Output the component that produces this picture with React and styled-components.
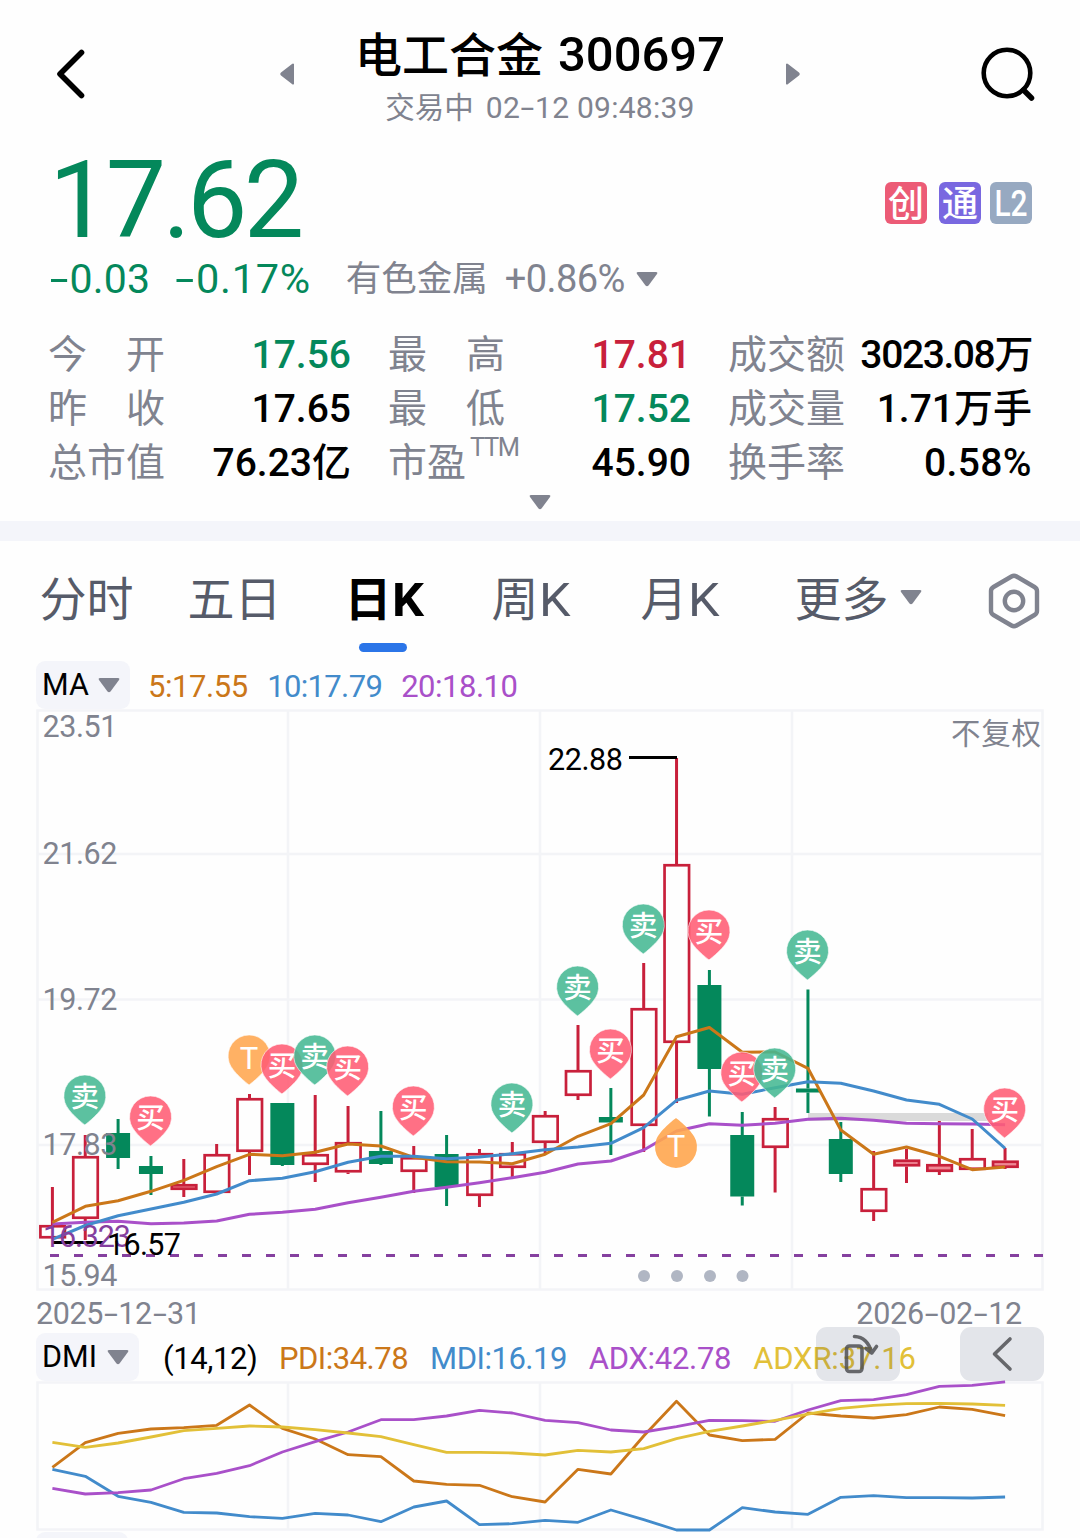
import React from "react";
import styled, { createGlobalStyle } from "styled-components";

const GREEN = "#04885b";
const RED = "#c8203b";
const GRAY = "#80838f";
const ORANGE = "#cb7719";
const BLUE = "#428bcb";
const PURPLE = "#a950c9";
const YELLOW = "#e2c038";
const GRID = "#f3f4f7";
const FONT = '"Roboto", "Noto Sans CJK SC", sans-serif';

const GlobalStyle = createGlobalStyle`
  * { box-sizing: border-box; }
  body { margin: 0; background: #fefefe; font-family: ${FONT}; }
`;

const Page = styled.main`
  width: 1080px;
  height: 1538px;
  overflow: hidden;
  display: flex;
  flex-direction: column;
  background: #fefefe;
`;

const Txt = styled.span`
  display: block;
  white-space: nowrap;
  font-size: ${(p) => p.$size}px;
  line-height: ${(p) => p.$lh || 40}px;
  color: ${(p) => p.$color || "#000"};
  font-weight: ${(p) => p.$weight || 400};
  letter-spacing: ${(p) => p.$ls || 0}px;
`;

const Dash = styled.span`
  display: inline-block;
  width: 0.5em;
  text-align: center;
  transform: scaleX(1.65);
`;

const dashed = (text) =>
  text.split("-").flatMap((part, i) => (i ? [<Dash key={i}>-</Dash>, part] : [part]));

/* Header */
const Header = styled.header`
  height: 142px;
  flex: none;
  padding: 0 46px 0 57px;
  display: grid;
  grid-template-columns: 42px 520px 53px;
  justify-content: space-between;
  padding-top: 27px;
`;
const BackButton = styled.div`padding-top: 22px;`;
const SearchButton = styled.div`padding-top: 19px;`;
const TitleGroup = styled.div`
  display: flex;
  justify-content: space-between;
`;
const Stepper = styled.div`padding-top: 36px;`;
const Titles = styled.div`
  display: flex;
  flex-direction: column;
  align-items: center;
`;
const TitleRow = styled.div`
  display: flex;
  height: ${(p) => p.$h}px;
  gap: ${(p) => p.$gap}px;
`;

/* Quote */
const Quote = styled.section`
  height: 182px;
  flex: none;
  padding: 0 48px 0 49px;
`;
const PriceRow = styled.div`
  height: 113px;
  display: flex;
  justify-content: space-between;
`;
const Badges = styled.div`
  display: flex;
  padding-top: 40px;
`;
const Badge = styled.span`
  width: 42px;
  height: 42px;
  margin-left: ${(p) => p.$gap || 0}px;
  border-radius: 6px;
  background: ${(p) => p.$bg};
  color: #fff;
  font-size: 36px;
  font-weight: 500;
  line-height: 46px;
  display: flex;
  justify-content: center;
`;
const Condensed = styled.span`
  display: block;
  flex: none;
  line-height: 44px;
  transform: scaleX(0.83);
`;
const ChangeRow = styled.div`
  display: flex;
  align-items: center;
  height: 47px;
`;
const Gap = styled.span`width: ${(p) => p.$w}px; flex: none;`;

/* Stats */
const Stats = styled.section`
  height: 197px;
  flex: none;
  padding: 3px 48px 0 48px;
`;
const StatGrid = styled.div`
  display: grid;
  grid-template-columns: 303px 303px 304px;
  column-gap: 37px;
  grid-auto-rows: 54px;
`;
const Stat = styled.div`
  display: flex;
  justify-content: space-between;
`;
const StatLabel = styled.div`display: flex;`;
const Sup = styled.span`
  font-size: 25.5px;
  line-height: 25px;
  margin-left: 4px;
  letter-spacing: -1.4px;
  color: ${GRAY};
`;
const Expand = styled.div`
  display: flex;
  justify-content: center;
  padding-top: 5px;
`;
const Divider = styled.div`
  height: 20px;
  flex: none;
  background: #f4f5fa;
`;

/* Period tabs */
const Tabs = styled.nav`
  height: 120px;
  flex: none;
  padding: 26px 0 0 39.5px;
  display: grid;
  grid-template-columns: 148px 157px 147px 149px 154px 193px 60px;
`;
const Tab = styled.div`
  display: flex;
  flex-wrap: wrap;
  align-content: flex-start;
  color: ${(p) => (p.$active ? "#000" : "#565b69")};
  font-weight: ${(p) => (p.$active ? 700 : 400)};
  font-size: 47px;
  line-height: 66px;
  white-space: nowrap;
`;
const Wide = styled.span`
  display: block;
  transform: scaleX(1.07);
  transform-origin: left;
`;
const Underline = styled.div`
  width: 48px;
  height: 9px;
  margin: 10px 60px 0 14.5px;
  border-radius: 5px;
  background: #2b75e8;
`;
const TabCaret = styled.span`
  display: flex;
  padding: 22px 0 0 11px;
`;
const SettingsIcon = styled.div`padding-top: 6px;`;

/* Indicators */
const LegendBar = styled.div`
  height: ${(p) => p.$h}px;
  flex: none;
  padding-left: 36px;
  display: flex;
  position: relative;
`;
const Picker = styled.div`
  width: ${(p) => p.$w}px;
  height: 48px;
  border-radius: 9px;
  background: #f4f5fa;
  padding: 0 10px 0 6px;
  display: flex;
  align-items: center;
  justify-content: space-between;
`;
const Chart = styled.svg`
  display: block;
  flex: none;
  overflow: visible;
  font-family: ${FONT};
`;
const Dates = styled.div`
  height: 42px;
  flex: none;
  display: flex;
  justify-content: space-between;
  padding: 2px 58px 0 36px;
`;
const FloatButton = styled.div`
  position: absolute;
  left: ${(p) => p.$x}px;
  top: -6px;
  width: 84px;
  height: 54px;
  border-radius: 11px;
  background: rgba(50, 60, 100, 0.13);
`;
const NextPanel = styled.div`
  width: 92px;
  height: 20px;
  margin: 1px 0 0 36px;
  border-radius: 9px;
  background: #f4f5fa;
  flex: none;
`;

const Caret = ({ w = 22, h = 16 }) => (
  <svg width={w} height={h} viewBox="0 0 22 16" preserveAspectRatio="none">
    <path d="M2 1H20Q22 1 21 3L12.5 14.5Q11 16 9.5 14.5L1 3Q0 1 2 1Z" fill={GRAY} />
  </svg>
);

const SideArrow = ({ flip }) => (
  <svg width="14" height="22" viewBox="0 0 14 22">
    <path d="M14 1V21Q13 22 12 21L1 12.5Q-.5 11 1 9.5L12 1Q13 0 14 1Z" fill={GRAY} transform={flip ? "matrix(-1 0 0 1 14 0)" : undefined} />
  </svg>
);

const px = (i) => 52.4 + i * 32.85;
const line = (ys) => ys.map((y, i) => `${px(i).toFixed(1)},${y}`).join(" ");

/* rising flag, high, body top, body bottom, low */
const CANDLES = [
  [1, 1187, 1225, 1238.5, 1238], [1, 1135, 1156, 1219, 1240], [0, 1119, 1133, 1158, 1169],
  [0, 1156, 1166, 1174, 1195], [1, 1159, 1184, 1190, 1197], [1, 1144, 1154, 1193, 1193],
  [1, 1094, 1098, 1152, 1175], [0, 1103, 1103, 1165, 1166], [1, 1095, 1154, 1165, 1182],
  [1, 1106, 1142, 1172.5, 1174], [0, 1111, 1151, 1164, 1165], [1, 1146, 1157, 1172, 1193],
  [0, 1135, 1154, 1187, 1206], [1, 1149, 1153, 1196, 1207], [1, 1142, 1153, 1168, 1177],
  [1, 1111, 1115, 1143, 1153], [1, 1025, 1070, 1096, 1100], [0, 1088, 1117, 1122.5, 1155],
  [1, 963, 1008, 1126, 1152], [1, 758, 864, 1043, 1103], [0, 970, 985, 1069, 1116.5],
  [0, 1112, 1135, 1196.5, 1205.5], [1, 1107, 1118, 1148, 1192.5], [0, 989.5, 1088.5, 1092.5, 1113],
  [0, 1122, 1139, 1174, 1182], [1, 1151, 1188, 1212, 1221], [1, 1149, 1159.5, 1166.5, 1183],
  [1, 1121, 1164, 1172, 1175], [1, 1129, 1158, 1170, 1170], [1, 1148, 1160.5, 1168, 1169],
];

const MA5 = [1222.3, 1206.3, 1200.7, 1191.3, 1180.3, 1166.7, 1154.3, 1155.7, 1152.3, 1144, 1146, 1157.3, 1161.7, 1162, 1163.7, 1154.3, 1136.3, 1123.7, 1095, 1036.7, 1027.5, 1052.3, 1052, 1068.3, 1130, 1154.3, 1147, 1156.3, 1169.7, 1167];
const MA10 = [1239.3, 1225.5, 1215.7, 1209, 1202.3, 1194, 1180.7, 1178.3, 1171.7, 1162.3, 1156.3, 1156.3, 1158.7, 1157, 1153.7, 1149.7, 1147, 1143.3, 1127.7, 1100.3, 1091, 1094.3, 1087.7, 1081.7, 1083.3, 1091, 1100, 1104.3, 1119, 1148.3];
const MA20 = [1224, 1222.3, 1221.3, 1223.7, 1223, 1221, 1214.3, 1212.3, 1209.3, 1202.7, 1197.3, 1191.3, 1187.3, 1182.7, 1177.7, 1172.3, 1164, 1161, 1150, 1131, 1123.7, 1125.3, 1123.3, 1119.3, 1118.3, 1120.3, 1123.3, 1123.7, 1124, 1124.7];

const PDI = [1467.3, 1442.7, 1433.3, 1429, 1427.7, 1425.3, 1405, 1428.3, 1439, 1454.7, 1456.7, 1481, 1484.3, 1485.3, 1496.7, 1502, 1469.3, 1474, 1436, 1401.3, 1435, 1440.7, 1439.3, 1413, 1416, 1418, 1414.7, 1407, 1409.3, 1415.7];
const MDI = [1469.3, 1476.3, 1496.3, 1502.3, 1512.3, 1513, 1516.7, 1518.3, 1513.3, 1515, 1521.7, 1507, 1501, 1524.7, 1523.7, 1520.3, 1522.3, 1510, 1519.7, 1530, 1530, 1507.7, 1512, 1514.3, 1497.3, 1495.7, 1497.7, 1497.7, 1498, 1497];
const ADX = [1488.3, 1494, 1492.7, 1490, 1478.7, 1473.3, 1465.7, 1452, 1441.7, 1432, 1419.7, 1419.7, 1416, 1410.3, 1413, 1420.3, 1422.7, 1430, 1432, 1426.7, 1420.3, 1420.7, 1421.3, 1410, 1400.7, 1399.7, 1394.7, 1386.3, 1385.3, 1381.8];
const ADXR = [1442.3, 1447.3, 1443, 1437, 1430.7, 1428.3, 1426, 1427, 1429.7, 1433, 1436.7, 1444.7, 1452.3, 1452.3, 1453, 1455, 1450.3, 1452, 1448.7, 1438.7, 1431.3, 1426, 1420.3, 1414, 1408.3, 1405.3, 1403.7, 1403.3, 1404, 1405.3];

/* candle index, top edge, kind */
const MARKERS = [
  [1, 1074, "卖"], [3, 1095, "买"], [6, 1034, "T"], [7, 1043, "买"], [8, 1034, "卖"], [9, 1045, "买"],
  [11, 1085, "买"], [14, 1082, "卖"], [16, 965, "卖"], [17, 1028, "买"], [18, 903, "卖"], [20, 909, "买"],
  [21, 1051, "买"], [22, 1047, "卖"], [23, 929, "卖"], [29, 1087, "买"],
];
const MARK_FILL = { 卖: "#45b893", 买: "#ff5c74", T: "#ffa64f" };
const DROP = "M0 51C-2 49.5 -17 38 -20 28.5A21 21 0 1 1 20 28.5C17 38 2 49.5 0 51Z";

const Candle = ({ i, c: [up, high, top, bottom, low] }) => {
  const x = px(i);
  const col = up ? RED : GREEN;
  return (
    <g>
      <path d={`M${x} ${high}V${top}M${x} ${bottom}V${low}`} stroke={col} strokeWidth="3" />
      {up ? (
        <rect x={x - 12} y={top + 1.25} width="24.5" height={bottom - top - 2.5} fill={bottom - top < 9 ? "#ef8795" : "#fefefe"} stroke={col} strokeWidth="2.7" />
      ) : (
        <rect x={x - 12} y={top} width="24" height={bottom - top} fill={col} />
      )}
    </g>
  );
};

const Marker = ({ i, y, kind }) => (
  <g transform={`translate(${px(i) - 0.4} ${y - 0.1})`}>
    <path d={DROP} fill={MARK_FILL[kind]} fillOpacity=".88" stroke="#fff" strokeOpacity=".6" strokeWidth="1" />
    <text y={kind === "T" ? 35 : 33} textAnchor="middle" fontSize={kind === "T" ? 31 : 28.5} fill="#fff" fontWeight={kind === "T" ? 400 : 500}>{kind}</text>
  </g>
);

const AXIS = [["23.51", 737], ["21.62", 864], ["19.72", 1010], ["17.83", 1155], ["15.94", 1286]];

const PriceChart = () => (
  <Chart width="1080" height="582" viewBox="0 709 1080 582">
    <path d="M37.5 710.5H1042.5V1289.5H37.5ZM288 711V1289M540 711V1289M792 711V1289M38 854H1042M38 999.5H1042M38 1145H1042" fill="none" stroke={GRID} strokeWidth="2.6" />
    <rect x="808" y="1113" width="180" height="8" fill="#dadada" />
    {CANDLES.map((c, i) => <Candle key={i} i={i} c={c} />)}
    <g fill="none" strokeWidth="3" strokeLinejoin="round">
      <polyline points={line(MA20)} stroke={PURPLE} />
      <polyline points={line(MA5)} stroke={ORANGE} />
      <polyline points={line(MA10)} stroke={BLUE} />
    </g>
    <path d="M50 1255.5H1043" stroke="#85409f" strokeWidth="3" strokeDasharray="9 15" />
    <path d="M52 1242.5H103M629 757.5H677" stroke="#000" strokeWidth="2.8" />
    <g fontSize="30.5" fill={GRAY}>
      {AXIS.map(([t, y]) => <text key={t} x="42.5" y={y} textLength="75">{t}</text>)}
      <text x="951" y="744" textLength="90" fontSize="29.5">不复权</text>
    </g>
    <text x="43" y="1247" textLength="88" fontSize="30.5" fill="#85409f">16.323</text>
    <g fontSize="30.5" fill="#000">
      <text x="107" y="1255" textLength="74">16.57</text>
      <text x="548" y="770" textLength="75">22.88</text>
    </g>
    {MARKERS.map(([i, y, kind]) => <Marker key={i} i={i} y={y} kind={kind} />)}
    <path d={DROP} transform="translate(676 1169) scale(1 -1)" fill="#ffa64f" fillOpacity=".9" />
    <text x="676" y="1157" textAnchor="middle" fontSize="31" fill="#fff">T</text>
    {[644, 677, 710, 742.5].map((x) => <circle key={x} cx={x} cy="1276" r="6" fill="#b0b6c3" />)}
  </Chart>
);

const DmiChart = () => (
  <Chart width="1080" height="150" viewBox="0 1381 1080 150">
    <path d="M37.5 1382.5H1042.5V1529.5H37.5ZM288 1383V1529M540 1383V1529M792 1383V1529" fill="none" stroke={GRID} strokeWidth="2.6" />
    <g fill="none" strokeWidth="2.8" strokeLinejoin="round">
      <polyline points={line(PDI)} stroke={ORANGE} />
      <polyline points={line(MDI)} stroke={BLUE} />
      <polyline points={line(ADX)} stroke={PURPLE} />
      <polyline points={line(ADXR)} stroke={YELLOW} />
    </g>
  </Chart>
);

const STATS = [
  { label: "今　开", value: "17.56", color: GREEN },
  { label: "最　高", value: "17.81", color: RED },
  { label: "成交额", value: "3023.08万", ls: -1.4 },
  { label: "昨　收", value: "17.65" },
  { label: "最　低", value: "17.52", color: GREEN },
  { label: "成交量", value: "1.71万手" },
  { label: "总市值", value: "76.23亿" },
  { label: "市盈", value: "45.90", sup: "TTM" },
  { label: "换手率", value: "0.58%", ls: 0.4 },
];

export default function App() {
  return (
    <Page>
      <GlobalStyle />
      <Header>
        <BackButton>
          <svg width="30" height="50" viewBox="0 0 30 50"><path d="M24.5 3.5L3 25L24.5 46.5" fill="none" stroke="#000" strokeWidth="5.6" strokeLinecap="round" strokeLinejoin="round" /></svg>
        </BackButton>
        <TitleGroup>
          <Stepper><SideArrow /></Stepper>
          <Titles>
            <TitleRow $gap={15} $h={56}>
              <Txt $size={47} $lh={58} $weight={500}>电工合金</Txt>
              <Txt $size={49} $lh={56} $weight={500}>300697</Txt>
            </TitleRow>
            <TitleRow $gap={12} $h={48}>
              <Txt $size={29.5} $lh={50} $color={GRAY}>交易中</Txt>
              <Txt $size={30} $lh={49} $color={GRAY} $ls={0.25}>{dashed("02-12 09:48:39")}</Txt>
            </TitleRow>
          </Titles>
          <Stepper><SideArrow flip /></Stepper>
        </TitleGroup>
        <SearchButton>
          <svg width="54" height="56" viewBox="0 0 54 56" fill="none" stroke="#000" strokeLinecap="round"><circle cx="26" cy="27" r="23.3" strokeWidth="4.6" /><path d="M42.5 44L50.5 52" strokeWidth="5.5" /></svg>
        </SearchButton>
      </Header>

      <Quote>
        <PriceRow>
          <Txt $size={107.5} $lh={116} $color={GREEN} $ls={-3.7}>17.62</Txt>
          <Badges>
            <Badge $bg="#ec5b76">创</Badge>
            <Badge $bg="#7968e0" $gap={12}>通</Badge>
            <Badge $bg="#97a9c1" $gap={9}><Condensed>L2</Condensed></Badge>
          </Badges>
        </PriceRow>
        <ChangeRow>
          <Txt $size={41} $lh={48} $color={GREEN} $ls={0.2}>{dashed("-0.03")}</Txt>
          <Gap $w={25} />
          <Txt $size={41.5} $lh={48} $color={GREEN} $ls={0.7}>{dashed("-0.17%")}</Txt>
          <Gap $w={35} />
          <Txt $size={35.5} $lh={52} $color={GRAY}>有色金属</Txt>
          <Gap $w={17} />
          <Txt $size={38} $lh={48} $color={GRAY} $ls={-0.6}>+0.86%</Txt>
          <Gap $w={11} />
          <Caret />
        </ChangeRow>
      </Quote>

      <Stats>
        <StatGrid>
          {STATS.map(({ label, value, color, sup, ls }) => (
            <Stat key={label}>
              <StatLabel>
                <Txt $size={39} $lh={57} $color={GRAY}>{label}</Txt>
                {sup && <Sup>{sup}</Sup>}
              </StatLabel>
              <Txt $size={39} $lh={56} $weight={500} $color={color} $ls={ls}>{value}</Txt>
            </Stat>
          ))}
        </StatGrid>
        <Expand><Caret /></Expand>
      </Stats>
      <Divider />

      <Tabs>
        <Tab>分时</Tab>
        <Tab>五日</Tab>
        <Tab $active>日<Wide>K</Wide><Underline /></Tab>
        <Tab>周<Wide>K</Wide></Tab>
        <Tab>月<Wide>K</Wide></Tab>
        <Tab>更多<TabCaret><Caret /></TabCaret></Tab>
        <SettingsIcon>
          <svg width="52" height="56" viewBox="0 0 52 56" fill="none" stroke={GRAY} strokeWidth="4.4" strokeLinejoin="round"><path d="M23.5 3.5Q26 2 28.5 3.5L46.5 14Q49 15.5 49 18V38Q49 40.5 46.5 42L28.5 52.5Q26 54 23.5 52.5L5.5 42Q3 40.5 3 38V18Q3 15.5 5.5 14Z" /><circle cx="26" cy="28" r="9.2" /></svg>
        </SettingsIcon>
      </Tabs>

      <LegendBar $h={48}>
        <Picker $w={94}><Txt $size={30.5} $lh={42}>MA</Txt><Caret /></Picker>
        <Gap $w={18} />
        <Txt $size={31} $lh={52} $color={ORANGE} $ls={-0.45}>5:17.55</Txt>
        <Gap $w={19.5} />
        <Txt $size={31} $lh={52} $color={BLUE} $ls={-0.65}>10:17.79</Txt>
        <Gap $w={19} />
        <Txt $size={31} $lh={52} $color={PURPLE} $ls={-0.5}>20:18.10</Txt>
      </LegendBar>
      <PriceChart />
      <Dates>
        <Txt $size={30.5} $lh={42} $color={GRAY} $ls={-0.4}>{dashed("2025-12-31")}</Txt>
        <Txt $size={30.5} $lh={42} $color={GRAY} $ls={-0.25}>{dashed("2026-02-12")}</Txt>
      </Dates>
      <LegendBar $h={48}>
        <Picker $w={103}><Txt $size={30.5} $lh={42}>DMI</Txt><Caret /></Picker>
        <Gap $w={24} />
        <Txt $size={31} $lh={52} $ls={-0.4}>(14,12)</Txt>
        <Gap $w={21.5} />
        <Txt $size={31} $lh={52} $color={ORANGE} $ls={-0.5}>PDI:34.78</Txt>
        <Gap $w={22} />
        <Txt $size={31} $lh={52} $color={BLUE} $ls={-0.5}>MDI:16.19</Txt>
        <Gap $w={22} />
        <Txt $size={31} $lh={52} $color={PURPLE} $ls={-0.3}>ADX:42.78</Txt>
        <Gap $w={22} />
        <Txt $size={31} $lh={52} $color={YELLOW} $ls={-0.15}>ADXR:37.16</Txt>
        <FloatButton $x={816}>
          <svg width="84" height="54" viewBox="0 0 84 54" fill="none" stroke="#4f5053" strokeOpacity=".85" strokeWidth="3.6" strokeLinecap="round" strokeLinejoin="round"><rect x="30.5" y="19" width="15.5" height="25.5" rx="3" /><path d="M38.5 9.5Q51.5 10 55.8 26M50 21.500L55.8 26L60.500 19.500" /></svg>
        </FloatButton>
        <FloatButton $x={960}>
          <svg width="84" height="54" viewBox="0 0 84 54" fill="none" stroke="#66676b" strokeWidth="3.6" strokeLinecap="round" strokeLinejoin="round"><path d="M50 12L34.500 27L50 42" /></svg>
        </FloatButton>
      </LegendBar>
      <DmiChart />
      <NextPanel />
    </Page>
  );
}
